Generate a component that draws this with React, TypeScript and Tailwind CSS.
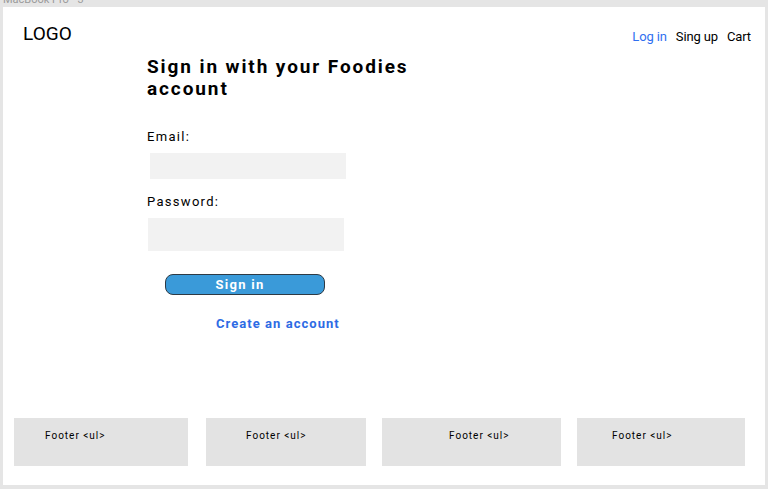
import React from 'react';

const footers = [
    { w: 'w-[174px] ml-[11px]', pl: 'pl-[31px]' },
    { w: 'w-[160px] ml-[18px]', pl: 'pl-[40px]' },
    { w: 'w-[179px] ml-[16px]', pl: 'pl-[67px]' },
    { w: 'w-[168px] ml-[16px]', pl: 'pl-[35px]' },
];

export default function App() {
    return (
        <div className="h-[489px] w-[768px] overflow-hidden bg-[#e5e5e5] px-[3px] pt-[7px] pb-[4px] font-['Roboto',sans-serif]">
            {/* Figma frame label, mostly clipped */}
            <div className="-mt-[13px] mb-[1px] h-[12px] text-[11px] leading-[12px] text-[#9a9a9a]">MacBook Pro - 3</div>

            <div className="flex h-[478px] flex-col bg-white">
                {/* Header */}
                <header className="flex items-start justify-between pl-[20px] pr-[14px] pt-[15px]">
                    <div className="text-[19px] leading-[24px] text-black">LOGO</div>
                    <nav className="mt-[6px] flex gap-[9px] text-[13px] leading-[18px] tracking-[-0.01em] text-black">
                        <a className="text-[#2f6ff0]">Log in</a>
                        <a>Sing up</a>
                        <a>Cart</a>
                    </nav>
                </header>

                {/* Form */}
                <main className="ml-[144px] mt-[10px] flex flex-col">
                    <h1 className="w-[290px] text-[19px] font-bold leading-[22px] tracking-[0.1em] text-black">
                        Sign in with your Foodies account
                    </h1>

                    <label className="mt-[29px] text-[13px] leading-[16px] tracking-[0.1em] text-black">Email:</label>
                    <div className="ml-[3px] mt-[8px] h-[26px] w-[196px] bg-[#f2f2f2]" />

                    <label className="mt-[15px] text-[13px] leading-[16px] tracking-[0.1em] text-black">Password:</label>
                    <div className="ml-[1px] mt-[8px] h-[33px] w-[196px] bg-[#f2f2f2]" />

                    <button className="ml-[18px] mt-[23px] h-[21px] w-[160px] rounded-[8px] border border-[#2e3a44] bg-[#3a9ad9] pr-[10px] text-[13px] font-bold leading-[18px] tracking-[0.1em] text-white">
                        Sign in
                    </button>

                    <a className="ml-[69px] mt-[21px] text-[13px] font-bold leading-[16px] tracking-[0.08em] text-[#2d6be4]">
                        Create an account
                    </a>
                </main>

                {/* Footer */}
                <footer className="mt-auto mb-[19px] flex">
                    {footers.map((f, i) => (
                        <div key={i} className={`h-[48px] bg-[#e3e3e3] pt-[11px] text-[10px] leading-[14px] tracking-[0.1em] text-black ${f.w} ${f.pl}`}>
                            Footer &lt;ul&gt;
                        </div>
                    ))}
                </footer>
            </div>
        </div>
    );
}
